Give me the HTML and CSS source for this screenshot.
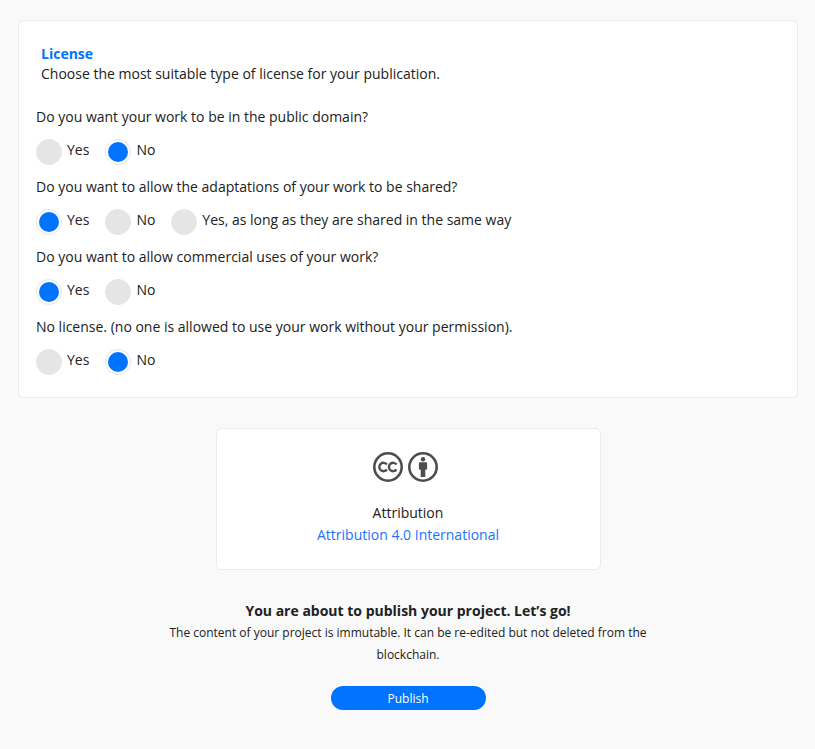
FILE: index.html
```
<!DOCTYPE html>
<html lang="en">
<head>
    <meta charset="UTF-8">
    <meta name="viewport" content="width=device-width, initial-scale=1.0">
    <title>Publish project</title>
    <link rel="stylesheet" href="styles.css">
</head>
<body>
    <form class="publish-form">
        <section class="card license-card">
            <div class="license-header">
                <h2>License</h2>
                <p>Choose the most suitable type of license for your publication.</p>
            </div>

            <fieldset class="question">
                <legend>Do you want your work to be in the public domain?</legend>
                <div class="options">
                    <label><input type="radio" name="domain" value="yes">Yes</label>
                    <label><input type="radio" name="domain" value="no" checked>No</label>
                </div>
            </fieldset>

            <fieldset class="question">
                <legend>Do you want to allow the adaptations of your work to be shared?</legend>
                <div class="options">
                    <label><input type="radio" name="adaptations" value="yes" checked>Yes</label>
                    <label><input type="radio" name="adaptations" value="no">No</label>
                    <label><input type="radio" name="adaptations" value="alike">Yes, as long as they are shared in the same way</label>
                </div>
            </fieldset>

            <fieldset class="question">
                <legend>Do you want to allow commercial uses of your work?</legend>
                <div class="options">
                    <label><input type="radio" name="commercial" value="yes" checked>Yes</label>
                    <label><input type="radio" name="commercial" value="no">No</label>
                </div>
            </fieldset>

            <fieldset class="question">
                <legend>No license. (no one is allowed to use your work without your permission).</legend>
                <div class="options">
                    <label><input type="radio" name="nolicense" value="yes">Yes</label>
                    <label><input type="radio" name="nolicense" value="no" checked>No</label>
                </div>
            </fieldset>
        </section>

        <section class="card result-card">
            <div class="cc-icons">
                <svg viewBox="0 0 30 30" aria-hidden="true">
                    <circle class="ring" cx="15" cy="15" r="13.7"/>
                    <path class="arc" d="M13.9 12.5A4.2 4.2 0 1 0 13.9 17.5M23.5 12.5A4.2 4.2 0 1 0 23.5 17.5"/>
                </svg>
                <svg viewBox="0 0 30 30" aria-hidden="true">
                    <circle class="ring" cx="15" cy="15" r="13.7"/>
                    <circle class="solid" cx="15" cy="7.3" r="2.2"/>
                    <path class="solid" d="M11.8 10.2h6.4a.9.9 0 0 1 .9.9v6.4h-1.8v7.4h-4.6v-7.4h-1.8v-6.4a.9.9 0 0 1 .9-.9z"/>
                </svg>
            </div>
            <p>Attribution</p>
            <a href="#">Attribution 4.0 International</a>
        </section>

        <section class="publish">
            <h3>You are about to publish your project. Let’s go!</h3>
            <p>The content of your project is immutable. It can be re-edited but not deleted from the blockchain.</p>
            <button type="submit" class="btn-publish">Publish</button>
        </section>
    </form>
</body>
</html>
```
FILE: styles.css
```
* {
    margin: 0;
    padding: 0;
    box-sizing: border-box;
}

body {
    font-family: 'Open Sans', sans-serif;
    font-size: 14px;
    line-height: 22px;
    color: #212121;
    background: #f9f9f9;
}

.publish-form {
    display: flex;
    flex-direction: column;
    align-items: center;
    padding: 20px 17px 39px 18px;
}

.card {
    background: #fff;
    border: 1px solid #ebebeb;
    border-radius: 6px;
}

.license-card {
    width: 100%;
    padding: 23px 17px 22px;
    line-height: 20px;
}

.license-header {
    padding-left: 5px;
    margin-bottom: 23px;
}

.license-header h2 {
    color: #0074ff;
    font-size: 14px;
    font-weight: 700;
}

.question {
    border: none;
}

.question + .question {
    margin-top: 12px;
}

.options {
    display: flex;
    flex-wrap: wrap;
    gap: 16px;
    margin-top: 12px;
}

.options label {
    display: flex;
    align-items: flex-start;
    gap: 5px;
    line-height: 22px;
    cursor: pointer;
}

.options input {
    appearance: none;
    flex-shrink: 0;
    width: 26px;
    height: 26px;
    border: 1px solid #e5e5e5;
    border-radius: 50%;
    background: #e5e5e5;
    cursor: pointer;
}

.options input:checked {
    padding: 2px;
    background: #0074ff content-box;
}

.result-card {
    width: 100%;
    max-width: 385px;
    margin-top: 30px;
    padding: 23px 20px;
    text-align: center;
}

.cc-icons {
    display: flex;
    justify-content: center;
    margin-bottom: 20px;
}

.cc-icons svg {
    width: 30px;
    height: 30px;
    margin-right: 5px;
}

.ring {
    fill: none;
    stroke: #4d4d4d;
    stroke-width: 2.6;
}

.arc {
    fill: none;
    stroke: #4d4d4d;
    stroke-width: 2.4;
}

.solid {
    fill: #4d4d4d;
}

.result-card a {
    display: block;
    color: #1a73ff;
    text-decoration: none;
}

.publish {
    display: flex;
    flex-direction: column;
    align-items: center;
    max-width: 500px;
    margin-top: 30px;
    text-align: center;
}

.publish h3 {
    font-size: 14px;
    font-weight: 700;
}

.publish p {
    font-size: 12px;
}

.btn-publish {
    width: 155px;
    height: 24px;
    margin-top: 20px;
    border: none;
    border-radius: 12px;
    background: #0074ff;
    color: #fff;
    font-family: inherit;
    font-size: 12px;
    cursor: pointer;
}
```
